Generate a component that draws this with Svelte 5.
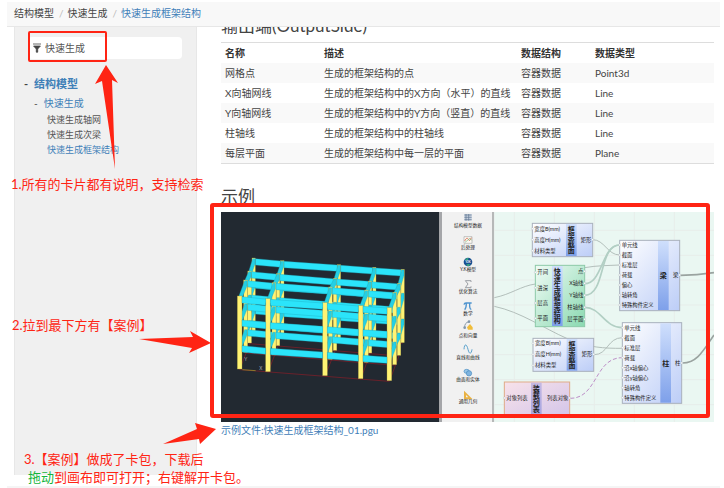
<script>
  const crumbs = ['结构模型', '快速生成'];
  const leaves = ['快速生成轴网', '快速生成次梁', '快速生成框架结构'];
  const rows = [
    ['网格点', '生成的框架结构的点', '容器数据', 'Point3d'],
    ['X向轴网线', '生成的框架结构中的X方向（水平）的直线', '容器数据', 'Line'],
    ['Y向轴网线', '生成的框架结构中的Y方向（竖直）的直线', '容器数据', 'Line'],
    ['柱轴线', '生成的框架结构中的柱轴线', '容器数据', 'Line'],
    ['每层平面', '生成的框架结构中每一层的平面', '容器数据', 'Plane']
  ];

  // Frame model: rows of columns from the back to the front of the building.
  const frames = [
    { xs: [98, 184, 354, 460, 545], tops: [140, 148, 160, 168, 174], height: 220, w: 10 },
    { xs: [86, 171, 342, 447, 534], tops: [179, 187, 201, 209, 216], height: 216, w: 11 },
    { xs: [74, 159, 328, 436, 521], tops: [206, 214, 227, 236, 243], height: 217, w: 12 },
    { xs: [56, 141, 312, 419, 505], tops: [254, 262, 274, 283, 289], height: 219, w: 14 }
  ];
  const levels = [147, 70, 0];

  const palette = ['结构模型数据', '后处理', 'Y.K模型', '优化算法', '数学', '点和向量', '直线和曲线', '曲面和实体', '通用几何'];

  const section = ['宽度B(mm)', '高度H(mm)', '材料类型'];
  const nodes = [
    { x: 934, y: 34, w: 181, h: 100, band: 101, kind: 'blue', title: '框架截面', ins: section, i0: 16, di: 33, outs: ['矩形'], o0: 49, dout: 0 },
    { x: 943, y: 160, w: 148, h: 184, band: 50, kind: 'green', title: '快速生成框架结构', ins: ['开间', '进深', '层高', '平面'], i0: 21, di: 46, outs: ['点', 'X轴线', 'Y轴线', '柱轴线', '层平面'], o0: 18, dout: 36 },
    { x: 1196, y: 85, w: 180, h: 211, band: 115, kind: 'blue', title: '梁', ins: ['单元线', '截面', '标准层', '荷载', '偏心', '轴转角', '特殊构件定义'], i0: 14, di: 30, outs: ['梁'], o0: 104, dout: 0 },
    { x: 936, y: 379, w: 182, h: 99, band: 101, kind: 'blue', title: '框架截面', ins: section, i0: 15, di: 33, outs: ['矩形'], o0: 48, dout: 0 },
    { x: 1204, y: 332, w: 178, h: 242, band: 114, kind: 'blue', title: '柱', ins: ['单元线', '截面', '标准层', '荷载', '沿x轴偏心', '沿y轴偏心', '轴转角', '特殊构件定义'], i0: 15, di: 30, outs: ['柱'], o0: 121, dout: 0 },
    { x: 850, y: 510, w: 196, h: 104, band: 80, kind: 'pink', title: '装载列表', ins: ['对象列表'], i0: 48, di: 0, outs: ['列表对象'], o0: 48, dout: 0 }
  ];
</script>

<div class="page">
  <nav class="crumbs" aria-label="位置">
    {#each crumbs as c}<a href="#top">{c}</a><span class="slash">/</span>{/each}<a class="current" href="#here">快速生成框架结构</a>
  </nav>

  <div class="body">
    <aside>
      <label class="search">
        <svg viewBox="0 0 10 10" aria-hidden="true"><path d="M1 1h8M1.6 3h6.8L5.7 6v3.2H4.3V6z" fill="#444" stroke="#444" stroke-width="0.8" /></svg>
        <input type="text" value="快速生成" aria-label="检索" />
      </label>
      <div class="tree">
        <div class="root"><span>-</span><a href="#model">结构模型</a></div>
        <div class="branch"><span>-</span><a href="#quick">快速生成</a></div>
        <ul>
          {#each leaves as leaf, i}
            <li><a href="#leaf{i}" class:active={i === 2}>{leaf}</a></li>
          {/each}
        </ul>
      </div>
    </aside>

    <main>
      <h2 class="cut">输出端(OutputSide)</h2>
      <table>
        <thead>
          <tr><th class="c1">名称</th><th class="c2">描述</th><th class="c3">数据结构</th><th>数据类型</th></tr>
        </thead>
        <tbody>
          {#each rows as r}
            <tr>{#each r as cell}<td>{cell}</td>{/each}</tr>
          {/each}
        </tbody>
      </table>
      <h2 class="example">示例</h2>
      <svg class="figure" viewBox="0 0 1479 630" role="img" aria-label="快速生成框架结构">
        <defs>
          <linearGradient id="blue" x1="0" y1="0" x2="1" y2="1"><stop offset="0" stop-color="#fff" /><stop offset="1" stop-color="#bccdf7" /></linearGradient>
          <linearGradient id="green" x1="0" y1="0" x2="1" y2="1"><stop offset="0" stop-color="#f0fbf5" /><stop offset="1" stop-color="#8ad9b1" /></linearGradient>
          <linearGradient id="pink" x1="0" y1="0" x2="1" y2="1"><stop offset="0" stop-color="#f8e2ea" /><stop offset="1" stop-color="#d3c5e9" /></linearGradient>
          <linearGradient id="band" x1="0" y1="0" x2="0" y2="1"><stop offset="0" stop-color="#cfdffc" /><stop offset="1" stop-color="#7ea0ea" /></linearGradient>
          <linearGradient id="lilac" x1="0" y1="0" x2="0" y2="1"><stop offset="0" stop-color="#c5b9e3" /><stop offset="1" stop-color="#a5a4e0" /></linearGradient>
        </defs>

        <rect width="655" height="630" fill="#222931" />
        <g class="ground">
          {#each frames as f}
            <path d="M{f.xs[0]} {f.tops[0] + f.height}L{f.xs[4]} {f.tops[4] + f.height}" />
          {/each}
          {#each [0, 1, 2, 3, 4] as c}
            <path d="M{frames[1].xs[c]} {frames[1].tops[c] + 216}L{frames[3].xs[c]} {frames[3].tops[c] + 219}" />
          {/each}
        </g>
        {#each frames as f, r}
          {#each f.xs as x, c}
            <rect class="column" x={x - f.w / 2} y={f.tops[c] - 2} width={f.w} height={f.height} />
          {/each}
          {#each levels as lv}
            {#each [0, 1, 2, 3] as c}
              <path class="beam" d="M{f.xs[c] + f.w / 2} {f.tops[c] + lv}L{f.xs[c + 1] - f.w / 2} {f.tops[c + 1] + lv - 1}v19L{f.xs[c] + f.w / 2} {f.tops[c] + lv + 19}z" />
            {/each}
            {#if r < 3}
              {#each f.xs as x, c}
                <path class="beam side" d="M{x - 3} {f.tops[c] + lv}L{frames[r + 1].xs[c] - 3} {frames[r + 1].tops[c] + lv}v14h6L{x + 4} {f.tops[c] + lv + 16}v-16z" />
              {/each}
            {/if}
          {/each}
        {/each}
        <path d="M64 473l40 3" stroke="#a3a12c" stroke-width="2" />
        <text x="115" y="474" class="axis">X</text>
        <text x="70" y="447" class="axis">Y</text>

        <rect x="654" width="9" height="630" fill="#a5a6a9" />
        <rect x="663" width="150" height="630" fill="#f1f1f1" />
        <rect x="813" width="7" height="630" fill="#b6b8b8" />
        <rect x="820" width="659" height="630" fill="#eaf7f2" />

        <g transform="translate(741 0)">
          <path d="M-11 6h22v20h-22z" fill="#c4d0df" />
          <path d="M-11 9h22M-11 16h22M-11 23h22M-6 6v20M2 6v20" stroke="#61758f" stroke-width="2" />
          <path d="M-12 74h24v20h-24z" fill="#fbf9f3" stroke="#a9a9a9" stroke-width="2" /><path d="M-10 87q7-14 11-5t9-5" fill="none" stroke="#e17f65" stroke-width="3" /><path d="M-9 91L6 79l5 6" fill="none" stroke="#7ab77d" stroke-width="2" />
          <circle cy="150" r="13" fill="#174f91" /><path d="M-9 144q5-9 11-5l-3 7zM-7 159l8-4 7 3-7 5z" fill="#36a382" /><text y="154" text-anchor="middle" font-size="10" font-weight="700" fill="#fff">YJK</text>
          <path d="M9 206H-8l8 10-8 11H9M9 206v4M9 223v4" fill="none" stroke="#9b9ea4" stroke-width="3" />
          <path d="M-12 278q1-5 6-5h17M-5 274q0 14-5 19M5 274q-1 18 5 18" fill="none" stroke="#4f94cf" stroke-width="4" />
          <path d="M-10 347q-1-15 13-18" fill="none" stroke="#8c9ba9" stroke-width="3" /><circle cx="-10" cy="347" r="4" fill="#8296aa" /><circle cx="3" cy="329" r="4" fill="#8296aa" /><path d="M-3 346l9-10 8 10v7H0z" fill="#f0bd3b" />
          <path d="M-12 412c1-18 8-17 12 0s10 14 12 0" fill="none" stroke="#5aa2cd" stroke-width="3" />
          <ellipse cx="-4" cy="478" rx="8" ry="6" fill="#9bc7e8" stroke="#478bc0" stroke-width="2" /><circle cx="3" cy="484" r="8" fill="#80b4df" stroke="#478bc0" stroke-width="2" />
          <path d="M-12 536v26h26zM-6 549v7h7z" fill="#e9b244" fill-rule="evenodd" />
          <path d="M-10 612h20v3h-20z" fill="#8d9097" />
          {#each palette as p, i}
            <text y={45 + i * 66} text-anchor="middle" font-size="14" fill="#222">{p}</text>
          {/each}
        </g>

        <g stroke="#e7edea" stroke-width="3">
          {#each [880, 1000, 1120, 1240, 1360] as x}<path d="M{x} 0v630" />{/each}
          {#each [55, 130, 204, 279, 354, 428, 503, 578] as y}<path d="M820 {y}h659" />{/each}
        </g>
        <g class="wires">
          <path d="M820 257C870 247 900 222 943 216" />
          <path d="M820 283C900 300 970 350 1037 379S1150 409 1204 409" />
          <path d="M1115 83C1150 83 1160 129 1196 129" />
          <path d="M1091 167C1130 160 1160 161 1196 159" />
          <path class="soft" d="M1091 215C1145 215 1142 99 1196 99" />
          <path class="soft" d="M1091 250C1155 250 1132 99 1196 99" />
          <path class="soft" d="M1091 286C1140 286 1150 347 1204 347" />
          <path d="M1120 428C1160 428 1160 377 1204 377" />
          <path class="dash" d="M1048 559C1130 559 1120 437 1204 437" />
          <path class="bold" d="M1378 190C1410 190 1440 188 1479 182" />
          <path class="bold" d="M1385 453C1430 453 1450 410 1479 369" />
        </g>
        {#each nodes as n}
          <g class="node {n.kind}" transform="translate({n.x} {n.y})">
            <rect class="box" width={n.w} height={n.h} fill="url(#{n.kind})" />
            <rect x={n.band} y="2" width="32" height={n.h - 4} fill={n.kind === 'pink' ? 'url(#lilac)' : 'url(#band)'} />
            <text class="title" x={n.band + 16} y={n.h / 2}>{n.title}</text>
            {#each n.ins as t, i}
              <circle class="port" cy={n.i0 + i * n.di} r="3" />
              <text x="6" y={n.i0 + 6 + i * n.di}>{t}</text>
            {/each}
            {#each n.outs as t, i}
              <circle class="port" cx={n.w} cy={n.o0 + i * n.dout} r="3" />
              <text x={n.w - 4} y={n.o0 + 6 + i * n.dout} text-anchor="end">{t}</text>
            {/each}
          </g>
        {/each}
      </svg>
      <a class="file" href="#pgu">示例文件:快速生成框架结构_01.pgu</a>
    </main>
  </div>
  <footer></footer>

  <svg class="marks" width="724" height="488" aria-hidden="true">
    <rect x="29" y="32" width="77" height="29" rx="1" fill="none" stroke="#ff2414" stroke-width="2" />
    <rect x="212" y="205" width="496" height="211" rx="1" fill="none" stroke="#ff2414" stroke-width="4" />
    <path d="M106 65L118 83L112 80L115 169L102 81L95 84z" />
    <path d="M139 339L193 337L190 331L211 343L189 353L192 348z" />
    <path d="M163 444L197 429L195 423L216 429L200 444L199 439z" />
  </svg>
  <p class="note one">1.所有的卡片都有说明，支持检索</p>
  <p class="note two">2.拉到最下方有【案例】</p>
  <p class="note three">3.【案例】做成了卡包，下载后</p>
  <p class="note four"><span>拖动</span>到画布即可打开；右键解开卡包。</p>
</div>

<style>
  :global(body) {
    margin: 0;
    background: #fff;
  }
  .page {
    position: relative;
    overflow: hidden;
    padding: 2px 4px 0 7px;
    color: #444;
    font: 10px/20px Lato, 'Noto Sans CJK SC', sans-serif;
  }
  a {
    color: #3f80b8;
    text-decoration: none;
  }
  .crumbs {
    height: 24px;
    padding-left: 7px;
    line-height: 22px;
    background: #f8f8f8;
    border-bottom: 1px solid #e7e7e7;
  }
  .crumbs a {
    color: #444;
  }
  .crumbs a.current {
    color: #3f80b8;
  }
  .slash {
    padding: 0 4px 0 5px;
    color: #bbb;
  }
  .body {
    display: flex;
    gap: 24px;
    padding: 0 6px 0 7px;
  }
  aside {
    box-sizing: border-box;
    flex: none;
    width: 183px;
    padding: 10px 14px 10px 13px;
    background: #f0f0f0;
    border: solid #e7e7e7;
    border-width: 0 1px;
  }
  .search {
    display: flex;
    align-items: center;
    gap: 3px;
    height: 22px;
    padding-left: 4px;
    background: #fff;
    border-radius: 4px;
  }
  .search svg {
    flex: none;
    width: 10px;
    height: 10px;
  }
  .search input {
    flex: 1;
    min-width: 0;
    padding: 0;
    border: 0;
    outline: 0;
    background: none;
    color: #555;
    font: inherit;
  }
  .tree {
    margin: 15px 0 0 -4px;
  }
  .root,
  .branch {
    display: flex;
    gap: 6px;
  }
  .root {
    font-size: 11px;
    font-weight: 700;
  }
  .branch {
    padding-left: 10px;
    line-height: 18px;
  }
  ul {
    margin: 0;
    padding: 0 0 0 23px;
    list-style: none;
    font-size: 9px;
    line-height: 15px;
    white-space: nowrap;
  }
  li a {
    color: #555;
  }
  li a.active {
    color: #3f80b8;
  }
  main {
    flex: 1;
    min-width: 0;
    height: 448px;
    overflow: hidden;
  }
  h2 {
    margin: 0;
    font-size: 17px;
    font-weight: 400;
    line-height: 20px;
  }
  .cut {
    margin: -11px 0 6px;
  }
  .example {
    margin: 23px 0 5px;
  }
  table {
    width: 100%;
    table-layout: fixed;
    border-collapse: separate;
    border-spacing: 0;
    border: solid #ddd;
    border-width: 1px 0;
  }
  th,
  td {
    height: 20px;
    padding: 0 4px;
    line-height: 20px;
    text-align: left;
    white-space: nowrap;
  }
  th {
    color: #333;
  }
  tbody tr:nth-child(odd) {
    background: #f9f9f9;
  }
  .c1 {
    width: 91px;
  }
  .c2 {
    width: 189px;
  }
  .c3 {
    width: 66px;
  }
  .figure {
    display: block;
    width: 100%;
    height: auto;
  }
  .file {
    display: block;
    line-height: 16px;
  }
  footer {
    height: 10px;
    margin-top: 11px;
    background: #f5f5f5;
  }
  .ground path {
    stroke: #8c1d27;
    stroke-width: 2;
  }
  .column {
    fill: #fff373;
    stroke: #a99d45;
    stroke-width: 1;
  }
  .beam {
    fill: #2be4fa;
    stroke: #1aa2b5;
    stroke-width: 1;
  }
  .side {
    fill: #24cfe4;
  }
  .axis {
    fill: #a9adb2;
    font-size: 14px;
  }
  .wires path {
    fill: none;
    stroke: #b3bfbb;
    stroke-width: 3;
  }
  .wires .soft {
    stroke: #b2cfc4;
    stroke-width: 5;
  }
  .wires .bold {
    stroke: #9aa3a0;
    stroke-width: 5;
  }
  .wires .dash {
    stroke: #bd8fc8;
    stroke-dasharray: 12 6;
  }
  .box {
    stroke: #a9b1bd;
    stroke-width: 3;
  }
  .green .box {
    stroke: #8cc9a8;
  }
  .pink .box {
    stroke: #dfab87;
  }
  .port {
    fill: #fff;
    stroke: #a5adb5;
    stroke-width: 1;
  }
  .node text {
    fill: #222;
    font-size: 16px;
  }
  .node .title {
    font-size: 21px;
    font-weight: 700;
    text-anchor: middle;
    writing-mode: vertical-rl;
  }
  .marks {
    position: absolute;
    top: 0;
    left: 0;
    fill: #ff2414;
    pointer-events: none;
  }
  .note {
    position: absolute;
    margin: 0;
    color: #ff2414;
    font-size: 13px;
    line-height: 18px;
    white-space: nowrap;
  }
  .one {
    top: 175px;
    left: 11px;
  }
  .two {
    top: 316px;
    left: 12px;
  }
  .three {
    top: 450px;
    left: 24px;
  }
  .four {
    top: 468px;
    left: 28px;
  }
  .four span {
    color: #14b53c;
  }
</style>
